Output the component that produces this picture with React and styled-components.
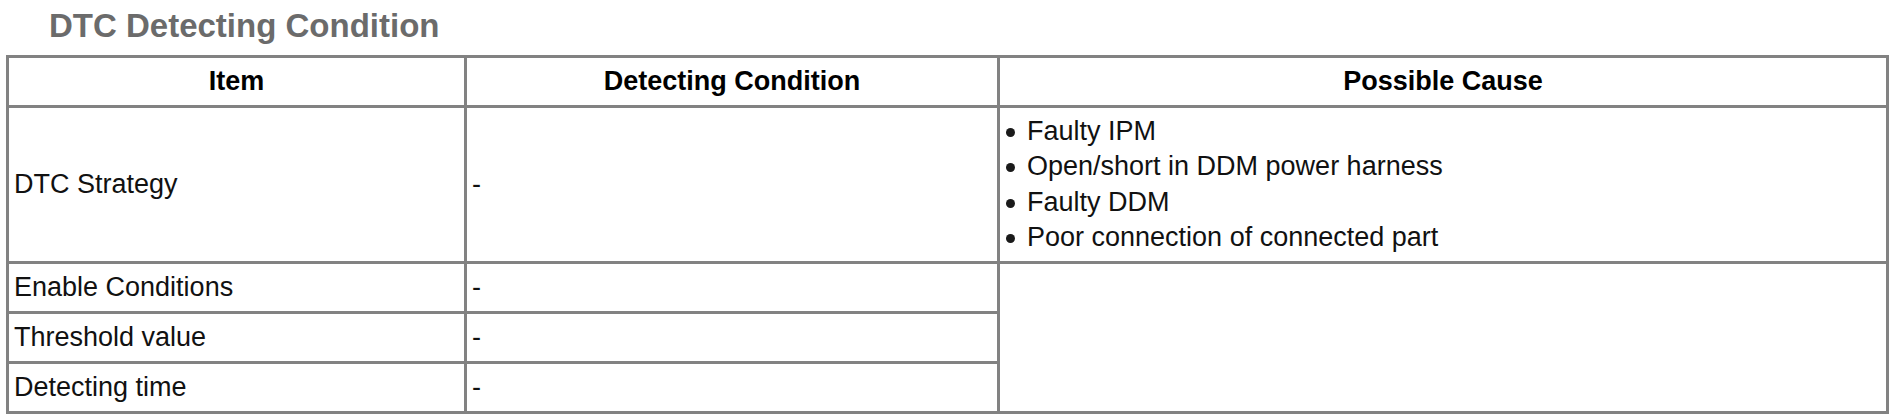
import React from "react";
import styled, { createGlobalStyle } from "styled-components";

const GlobalStyle = createGlobalStyle`
  html, body {
    margin: 0;
    padding: 0;
    background: #ffffff;
  }
  body {
    font-family: "Liberation Sans", Arial, sans-serif;
    color: #111;
  }
`;

const Page = styled.div`
  padding: 6px 5px 0 6px;
  width: 1883px;
`;

const Title = styled.h2`
  margin: 0 0 9px 43px;
  font-size: 33px;
  line-height: 40px;
  font-weight: bold;
  color: #6b6b6b;
`;

const Table = styled.table`
  width: 1883px;
  border-collapse: collapse;
  table-layout: fixed;
  border: 3px solid #828282;
`;

const HeadCell = styled.th`
  border: 3px solid #828282;
  height: 47px;
  padding: 0;
  font-size: 27px;
  font-weight: bold;
  text-align: center;
  vertical-align: middle;
  color: #000;
`;

const Cell = styled.td`
  border: 3px solid #828282;
  height: ${(p) => (p.$tall ? "153px" : "47px")};
  padding: 0 5px;
  font-size: 27px;
  text-align: left;
  vertical-align: middle;
  color: #111;
`;

const CauseList = styled.ul`
  list-style: none;
  margin: 0;
  padding: 0 0 0 1px;
`;

const CauseItem = styled.li`
  display: flex;
  align-items: center;
  line-height: 35.5px;
  font-size: 27px;
`;

const Bullet = styled.span`
  flex: none;
  width: 9px;
  height: 9px;
  border-radius: 50%;
  background: #1a1a1a;
  margin-right: 12px;
  margin-top: 2px;
`;

const causes = [
  "Faulty IPM",
  "Open/short in DDM power harness",
  "Faulty DDM",
  "Poor connection of connected part",
];

const rows = [
  ["Enable Conditions", "-"],
  ["Threshold value", "-"],
  ["Detecting time", "-"],
];

export default function App() {
  return (
    <>
      <GlobalStyle />
      <Page>
        <Title>DTC Detecting Condition</Title>
        <Table>
          <colgroup>
            <col style={{ width: "458px" }} />
            <col style={{ width: "533px" }} />
            <col style={{ width: "889px" }} />
          </colgroup>
          <thead>
            <tr>
              <HeadCell>Item</HeadCell>
              <HeadCell>Detecting Condition</HeadCell>
              <HeadCell>Possible Cause</HeadCell>
            </tr>
          </thead>
          <tbody>
            <tr>
              <Cell $tall>DTC Strategy</Cell>
              <Cell $tall>-</Cell>
              <Cell $tall>
                <CauseList>
                  {causes.map((c) => (
                    <CauseItem key={c}>
                      <Bullet />
                      {c}
                    </CauseItem>
                  ))}
                </CauseList>
              </Cell>
            </tr>
            {rows.map(([item, cond], i) => (
              <tr key={item}>
                <Cell>{item}</Cell>
                <Cell>{cond}</Cell>
                {i === 0 && <Cell rowSpan={3} />}
              </tr>
            ))}
          </tbody>
        </Table>
      </Page>
    </>
  );
}
